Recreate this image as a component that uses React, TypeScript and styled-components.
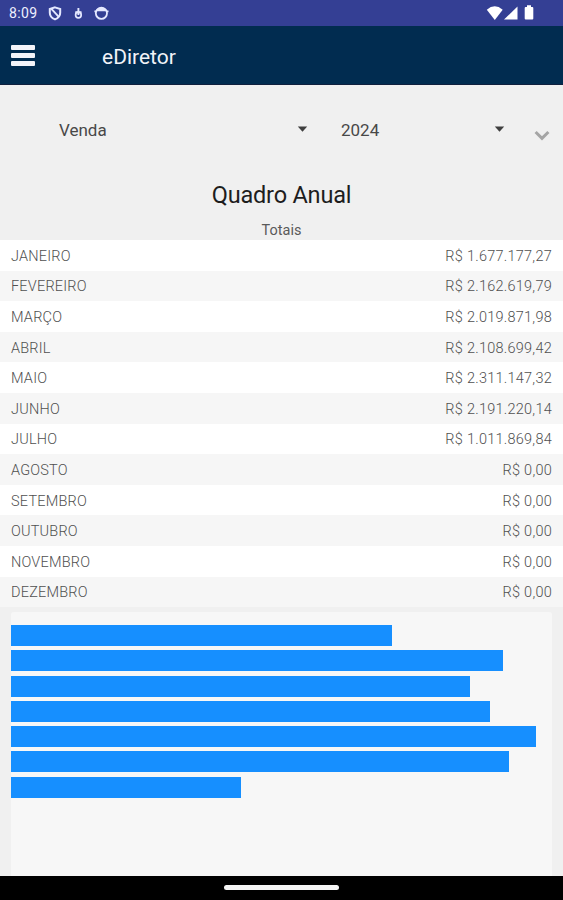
import React from 'react';
import styled, { createGlobalStyle } from 'styled-components';

const GlobalStyle = createGlobalStyle`
  * { box-sizing: border-box; }
  body {
    margin: 0;
    font-family: Roboto, 'Liberation Sans', sans-serif;
    background: #f0f0f0;
  }
`;

const Screen = styled.div`
  display: flex;
  flex-direction: column;
  width: 563px;
  height: 900px;
  overflow: hidden;
  background: #f0f0f0;
`;

const StatusBar = styled.div`
  display: flex;
  justify-content: space-between;
  flex: none;
  height: 26px;
  padding-left: 9px;
  background: #343f94;
  color: #eef0ff;
`;

const StatusSide = styled.div`
  display: flex;
  align-items: center;
`;

const Clock = styled.time`
  width: 38px;
  font-size: 14px;
  line-height: 26px;
  letter-spacing: 0.4px;
`;

const Header = styled.header`
  display: flex;
  align-items: center;
  flex: none;
  height: 59px;
  padding-left: 11px;
  background: #012c50;
  border-bottom: 1px solid #10203e;
`;

const MenuButton = styled.button`
  display: flex;
  flex-direction: column;
  gap: 3px;
  width: 24px;
  margin: 0 67px 0 0;
  padding: 0;
  border: 0;
  background: none;
`;

const MenuLine = styled.span`
  height: 5px;
  border-radius: 1px;
  background: #f3f4fa;
`;

const AppTitle = styled.h1`
  margin: 4px 0 0;
  font-size: 21px;
  font-weight: 400;
  line-height: 28px;
  letter-spacing: 0;
  color: #f1f3f8;
`;

const Filters = styled.div`
  display: flex;
  align-items: center;
  flex: none;
  height: 90px;
  padding-left: 59px;
`;

const Select = styled.div<{ $width: number }>`
  display: flex;
  align-items: center;
  justify-content: space-between;
  width: ${(p) => p.$width}px;
  margin-top: -1px;
  font-size: 17px;
  line-height: 20px;
  letter-spacing: 0;
  color: #484848;
`;

const Titles = styled.section`
  display: flex;
  flex-direction: column;
  align-items: center;
  flex: none;
  height: 65px;
  padding-top: 6px;
`;

const Title = styled.h2`
  margin: 0;
  font-size: 23.5px;
  font-weight: 400;
  line-height: 28px;
  letter-spacing: -0.2px;
  color: #1d1d1d;
`;

const Subtitle = styled.p`
  margin: 13px 0 0;
  font-size: 14.5px;
  line-height: 18px;
  letter-spacing: 0;
  color: #5a5a5a;
`;

const Months = styled.div`
  flex: none;
  height: 367.5px;
`;

const MonthRow = styled.div`
  display: flex;
  justify-content: space-between;
  align-items: center;
  height: 30.6px;
  padding: 2px 11px 0;
  background: #fff;
  font-size: 14.5px;
  font-weight: 300;
  color: #505050;
  &:nth-child(even) { background: #f6f6f6; }
`;

const MonthName = styled.span`
  letter-spacing: 0.2px;
`;

const Amount = styled.span`
  letter-spacing: 0.25px;
`;

const Chart = styled.div`
  display: flex;
  flex-direction: column;
  gap: 4.3px;
  flex: 1;
  margin: 4.5px 11px 0;
  padding-top: 13px;
  border-radius: 3px 3px 0 0;
  background: #f7f7f7;
`;

const Bar = styled.div`
  height: 21px;
  background: #168fff;
`;

const NavBar = styled.div`
  display: flex;
  justify-content: center;
  align-items: center;
  flex: none;
  height: 24.5px;
  background: #000;
`;

const NavHandle = styled.div`
  width: 115px;
  height: 5px;
  border-radius: 3px;
  background: #f5f5f5;
`;

const months: [string, number][] = [
  ['JANEIRO', 1677177.27],
  ['FEVEREIRO', 2162619.79],
  ['MARÇO', 2019871.98],
  ['ABRIL', 2108699.42],
  ['MAIO', 2311147.32],
  ['JUNHO', 2191220.14],
  ['JULHO', 1011869.84],
  ['AGOSTO', 0],
  ['SETEMBRO', 0],
  ['OUTUBRO', 0],
  ['NOVEMBRO', 0],
  ['DEZEMBRO', 0],
];

const PIXELS_PER_REAL = 525.3 / 2311147.32;

const formatAmount = (value: number) => {
  const [whole, cents] = value.toFixed(2).split('.');
  return `R$ ${whole.replace(/\B(?=(\d{3})+$)/g, '.')},${cents}`;
};

const NotificationIcons = () => (
  <svg width="64" height="26" viewBox="0 0 64 26" fill="none" stroke="#e4e8ff">
    <path d="M8 7.4 13.2 9V12.8C13.2 16 11 18.3 8 19.4 5 18.3 2.8 16 2.8 12.8V9Z" strokeWidth="2" />
    <path d="M4 8.4 12 17.2" strokeWidth="1.9" />
    <circle cx="31.4" cy="15" r="2.8" strokeWidth="1.7" />
    <path d="M31.4 8v7M28.3 12.3h6.2" strokeWidth="1.9" />
    <circle cx="54.4" cy="13.3" r="5.6" strokeWidth="1.8" />
    <path d="M49.4 9.3Q54.4 5.5 59.4 9.3V11.3H49.4Z" fill="#e4e8ff" stroke="none" />
    <path d="M47.4 11.4h2.5M59 11.4h2.5" strokeWidth="1.6" />
  </svg>
);

const SignalIcons = () => (
  <svg width="77" height="26" viewBox="0 0 77 26" fill="#fff">
    <path d="M.8 9.7Q8.7 2.8 16.7 9.7L8.8 20Z" />
    <path d="M31.5 6.5V19.5H18Z" />
    <path d="M41 5.3h4v1.8h1.3q1 0 1 1V18.5q0 1-1 1h-6.6q-1 0-1-1V8.1q0-1 1-1H41Z" />
  </svg>
);

const Caret = () => (
  <svg width="11" height="7" viewBox="0 0 11 7">
    <path d="M.8.6H10.2L5.5 5.8Z" fill="#3f3f3f" />
  </svg>
);

const ExpandButton = styled.button`
  display: flex;
  margin: 11px 0 0 29px;
  padding: 0;
  border: 0;
  background: none;
`;

const YearGap = styled.div`
  width: 33px;
`;

export default function App() {
  return (
    <Screen>
      <GlobalStyle />
      <StatusBar>
        <StatusSide>
          <Clock>8:09</Clock>
          <NotificationIcons />
        </StatusSide>
        <StatusSide>
          <SignalIcons />
        </StatusSide>
      </StatusBar>
      <Header>
        <MenuButton aria-label="Menu">
          <MenuLine />
          <MenuLine />
          <MenuLine />
        </MenuButton>
        <AppTitle>eDiretor</AppTitle>
      </Header>
      <Filters>
        <Select $width={249}>
          Venda
          <Caret />
        </Select>
        <YearGap />
        <Select $width={164}>
          2024
          <Caret />
        </Select>
        <ExpandButton aria-label="Expandir">
          <svg width="16" height="11" viewBox="0 0 16 11" fill="none">
            <path d="M1.6 2 8 8.4 14.4 2" stroke="#a5a5a5" strokeWidth="3" />
          </svg>
        </ExpandButton>
      </Filters>
      <Titles>
        <Title>Quadro Anual</Title>
        <Subtitle>Totais</Subtitle>
      </Titles>
      <Months>
        {months.map(([name, value]) => (
          <MonthRow key={name}>
            <MonthName>{name}</MonthName>
            <Amount>{formatAmount(value)}</Amount>
          </MonthRow>
        ))}
      </Months>
      <Chart>
        {months
          .filter(([, value]) => value > 0)
          .map(([name, value]) => (
            <Bar key={name} style={{ width: value * PIXELS_PER_REAL }} />
          ))}
      </Chart>
      <NavBar>
        <NavHandle />
      </NavBar>
    </Screen>
  );
}
